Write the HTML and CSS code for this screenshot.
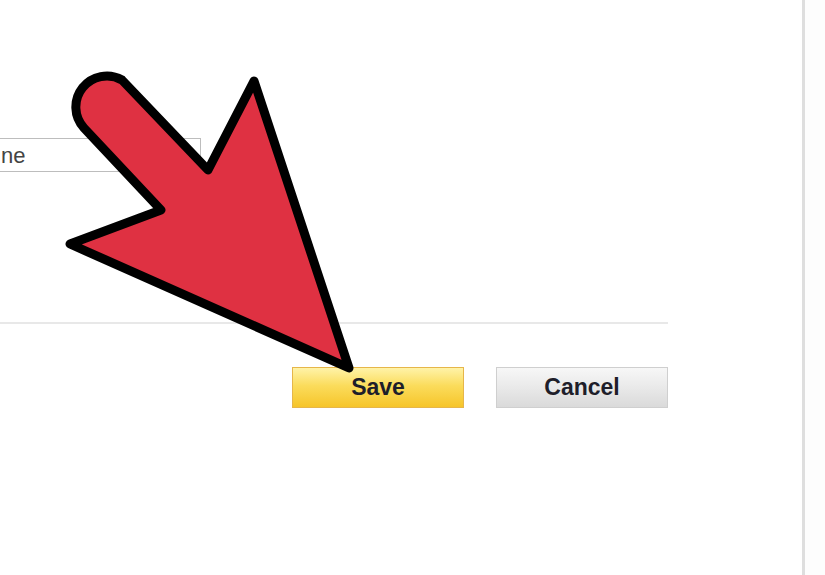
FILE: index.html
```html
<!DOCTYPE html>
<html lang="en">
<head>
    <meta charset="UTF-8">
    <meta name="viewport" content="width=device-width, initial-scale=1.0">
    <title>Save settings</title>
    <link rel="stylesheet" href="styles.css">
</head>
<body>
    <div class="page">
        <!-- Form area -->
        <div class="form">
            <div class="field">ne</div>
            <div class="rule"></div>
            <div class="actions">
                <button class="btn btn-save">Save</button>
                <button class="btn btn-cancel">Cancel</button>
            </div>
        </div>

        <div class="side-rule"></div>
        <div class="side"></div>
    </div>

    <!-- Pointer arrow drawn over the form -->
    <svg class="arrow" width="825" height="575" viewBox="0 0 825 575">
        <path d="M 122 80 L 208 170 L 254 81 L 349 368 L 70 244 L 161 210 L 84 128 A 31 31 0 0 1 122 80 Z"
              fill="#df3142" stroke="#000" stroke-width="9" stroke-linejoin="round"/>
    </svg>
</body>
</html>
```

FILE: styles.css
```css
body {
    margin: 0;
    background: #fff;
    font-family: Arial, "Liberation Sans", sans-serif;
    overflow: hidden;
}

.page {
    display: flex;
    height: 575px;
}

.form {
    width: 802px;
    padding-top: 138px;
    box-sizing: border-box;
}

/* text field, its left border runs off the page */
.field {
    width: 203px;
    height: 34px;
    margin-left: -2px;
    padding: 0 0 0 2px;
    box-sizing: border-box;
    border: 1px solid #bdbdbd;
    color: #444;
    font-size: 22px;
    line-height: 34px;
}

.rule {
    width: 668px;
    height: 2px;
    margin-top: 150px;
    background: #e8e8e8;
}

.actions {
    width: 668px;
    display: flex;
    justify-content: flex-end;
    gap: 32px;
    margin-top: 43px;
}

.btn {
    width: 172px;
    height: 41px;
    padding: 0;
    font-family: Arial, "Liberation Sans", sans-serif;
    font-size: 23px;
    font-weight: bold;
    color: #1e1e2a;
    cursor: pointer;
}

.btn-save {
    border: 1px solid #e6b64a;
    background: linear-gradient(#fff3a8 0%, #fbdc5c 45%, #f6c52a 100%);
}

.btn-cancel {
    border: 1px solid #cfcfcf;
    background: linear-gradient(#f7f7f7 0%, #e9e9e9 50%, #dadada 100%);
}

.side-rule {
    width: 3px;
    background: #dedede;
}

.side {
    flex: 1;
    background: #fdfdfd;
}

.arrow {
    position: absolute;
    top: 0;
    left: 0;
    pointer-events: none;
}
```
